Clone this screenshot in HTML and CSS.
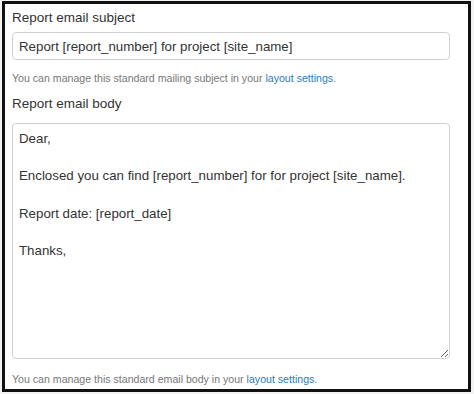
FILE: index.html
```html
<!DOCTYPE html>
<html lang="en">
<head>
    <meta charset="UTF-8">
    <meta name="viewport" content="width=device-width, initial-scale=1.0">
    <title>Report email</title>
    <link rel="stylesheet" href="styles.css">
</head>
<body>
    <div class="frame">
        <div class="field">
            <label class="label" for="subject">Report email subject</label>
            <input class="input" id="subject" type="text" value="Report [report_number] for project [site_name]">
            <p class="help">You can manage this standard mailing subject in your <a href="#">layout settings</a>.</p>
        </div>
        <div class="field">
            <label class="label" for="body">Report email body</label>
            <textarea class="input area" id="body">Dear,

Enclosed you can find [report_number] for for project [site_name].

Report date: [report_date]

Thanks,</textarea>
            <p class="help help-last">You can manage this standard email body in your <a href="#">layout settings</a>.</p>
        </div>
    </div>
</body>
</html>
```

FILE: styles.css
```css
*{
    margin: 0;
    padding: 0;
    box-sizing: border-box;
}
body{
    background-color: #f3f3f3;
    font-family: "Liberation Sans", Arial, sans-serif;
    color: #333;
    padding: 1px 3px 2px 2px;
}
.frame{
    height: 391px;
    background-color: #fff;
    border: 3px solid #111;
    padding: 4px 18px 0 7px;
}
.label{
    display: block;
    font-size: 13.5px;
    line-height: 20px;
    color: #333;
}
.input{
    display: block;
    width: 100%;
    height: 28px;
    margin-top: 4px;
    padding: 0 6px;
    border: 1px solid #d0d0d0;
    border-radius: 4px;
    font-family: inherit;
    font-size: 13.3px;
    color: #333;
    background-color: #fff;
}
.area{
    height: 236px;
    margin-top: 9px;
    padding: 6px 6px;
    line-height: 18.7px;
    resize: vertical;
}
.help{
    font-size: 10.6px;
    color: #777;
    margin: 11px 0 9px;
    line-height: 14px;
}
.help-last{
    margin-top: 13px;
}
.help a{
    color: #2b7bb9;
    text-decoration: none;
}
```
